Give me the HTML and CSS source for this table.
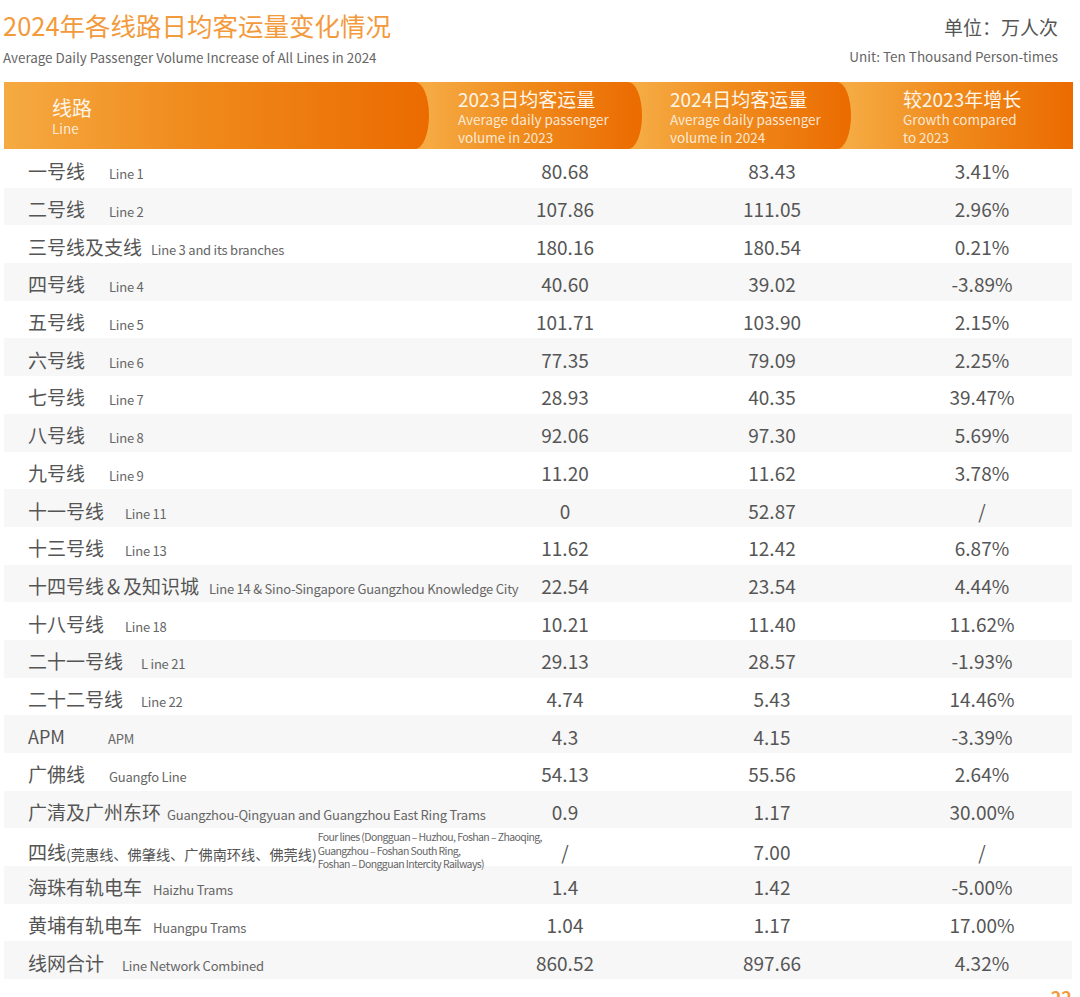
FILE: index.html
```html
<!DOCTYPE html>
<html lang="zh-CN">
<head>
<meta charset="utf-8">
<title>2024年各线路日均客运量变化情况</title>
<link rel="stylesheet" href="styles.css">
</head>
<body>
<div class="page">
  <header class="top">
    <div class="heading">
      <h1 class="title">2024年各线路日均客运量变化情况</h1>
      <p class="subtitle">Average Daily Passenger Volume Increase of All Lines in 2024</p>
    </div>
    <div class="unit">
      <p class="unit-cn">单位：万人次</p>
      <p class="unit-en">Unit: Ten Thousand Person-times</p>
    </div>
  </header>

  <div class="thead">
    <div class="hcell h1 arc">
      <div class="h-cn big">线路</div>
      <div class="h-en">Line</div>
    </div>
    <div class="hcell h2 arc">
      <div class="h-cn">2023日均客运量</div>
      <div class="h-en">Average daily passenger<br>volume in 2023</div>
    </div>
    <div class="hcell h3 arc">
      <div class="h-cn">2024日均客运量</div>
      <div class="h-en">Average daily passenger<br>volume in 2024</div>
    </div>
    <div class="hcell h4">
      <div class="h-cn">较2023年增长</div>
      <div class="h-en">Growth compared<br>to 2023</div>
    </div>
  </div>

  <div class="tbody">
    <div class="row"><div class="name"><span class="cn">一号线</span><span class="en">Line 1</span></div><div class="num">80.68</div><div class="num">83.43</div><div class="num pct">3.41%</div></div>
    <div class="row"><div class="name"><span class="cn">二号线</span><span class="en">Line 2</span></div><div class="num">107.86</div><div class="num">111.05</div><div class="num pct">2.96%</div></div>
    <div class="row"><div class="name"><span class="cn">三号线及支线</span><span class="en g9">Line 3 and its branches</span></div><div class="num">180.16</div><div class="num">180.54</div><div class="num pct">0.21%</div></div>
    <div class="row"><div class="name"><span class="cn">四号线</span><span class="en">Line 4</span></div><div class="num">40.60</div><div class="num">39.02</div><div class="num pct">-3.89%</div></div>
    <div class="row"><div class="name"><span class="cn">五号线</span><span class="en">Line 5</span></div><div class="num">101.71</div><div class="num">103.90</div><div class="num pct">2.15%</div></div>
    <div class="row"><div class="name"><span class="cn">六号线</span><span class="en">Line 6</span></div><div class="num">77.35</div><div class="num">79.09</div><div class="num pct">2.25%</div></div>
    <div class="row"><div class="name"><span class="cn">七号线</span><span class="en">Line 7</span></div><div class="num">28.93</div><div class="num">40.35</div><div class="num pct">39.47%</div></div>
    <div class="row"><div class="name"><span class="cn">八号线</span><span class="en">Line 8</span></div><div class="num">92.06</div><div class="num">97.30</div><div class="num pct">5.69%</div></div>
    <div class="row"><div class="name"><span class="cn">九号线</span><span class="en">Line 9</span></div><div class="num">11.20</div><div class="num">11.62</div><div class="num pct">3.78%</div></div>
    <div class="row"><div class="name"><span class="cn">十一号线</span><span class="en g21">Line 11</span></div><div class="num">0</div><div class="num">52.87</div><div class="num pct">/</div></div>
    <div class="row"><div class="name"><span class="cn">十三号线</span><span class="en g21">Line 13</span></div><div class="num">11.62</div><div class="num">12.42</div><div class="num pct">6.87%</div></div>
    <div class="row"><div class="name"><span class="cn">十四号线＆及知识城</span><span class="en g10">Line 14 &amp; Sino-Singapore Guangzhou Knowledge City</span></div><div class="num">22.54</div><div class="num">23.54</div><div class="num pct">4.44%</div></div>
    <div class="row"><div class="name"><span class="cn">十八号线</span><span class="en g21">Line 18</span></div><div class="num">10.21</div><div class="num">11.40</div><div class="num pct">11.62%</div></div>
    <div class="row"><div class="name"><span class="cn">二十一号线</span><span class="en g18">L ine 21</span></div><div class="num">29.13</div><div class="num">28.57</div><div class="num pct">-1.93%</div></div>
    <div class="row"><div class="name"><span class="cn">二十二号线</span><span class="en g18">Line 22</span></div><div class="num">4.74</div><div class="num">5.43</div><div class="num pct">14.46%</div></div>
    <div class="row"><div class="name"><span class="cn apm">APM</span><span class="en">APM</span></div><div class="num">4.3</div><div class="num">4.15</div><div class="num pct">-3.39%</div></div>
    <div class="row"><div class="name"><span class="cn">广佛线</span><span class="en">Guangfo Line</span></div><div class="num">54.13</div><div class="num">55.56</div><div class="num pct">2.64%</div></div>
    <div class="row"><div class="name"><span class="cn">广清及广州东环</span><span class="en g6">Guangzhou-Qingyuan and Guangzhou East Ring Trams</span></div><div class="num">0.9</div><div class="num">1.17</div><div class="num pct">30.00%</div></div>
    <div class="row"><div class="name four"><span class="cn">四线<small class="cn-sub">(莞惠线、佛肇线、广佛南环线、佛莞线)</small></span><span class="en-multi">Four lines (Dongguan – Huzhou, Foshan – Zhaoqing,<br>Guangzhou – Foshan South Ring,<br>Foshan – Dongguan Intercity Railways)</span></div><div class="num">/</div><div class="num">7.00</div><div class="num pct">/</div></div>
    <div class="row"><div class="name"><span class="cn">海珠有轨电车</span><span class="en g11">Haizhu Trams</span></div><div class="num">1.4</div><div class="num">1.42</div><div class="num pct">-5.00%</div></div>
    <div class="row"><div class="name"><span class="cn">黄埔有轨电车</span><span class="en g11">Huangpu Trams</span></div><div class="num">1.04</div><div class="num">1.17</div><div class="num pct">17.00%</div></div>
    <div class="row"><div class="name"><span class="cn">线网合计</span><span class="en g18">Line Network Combined</span></div><div class="num">860.52</div><div class="num">897.66</div><div class="num pct">4.32%</div></div>
  </div>

  <div class="pageno">22</div>
</div>
</body>
</html>
```

FILE: styles.css
```css
* { box-sizing: border-box; }
html, body { margin: 0; padding: 0; background: #ffffff; }
body {
  font-family: "Noto Sans CJK SC", "Noto Sans", sans-serif;
  color: #555555;
}
.page {
  width: 1080px;
  height: 997px;
  overflow: hidden;
}

/* top heading */
.top {
  display: flex;
  justify-content: space-between;
  height: 82px;
  padding: 8px 22px 0 3px;
}
.title {
  margin: 0;
  font-size: 25.5px;
  line-height: 34px;
  font-weight: 400;
  color: #f39a3c;
}
.subtitle {
  margin: 6px 0 0;
  font-size: 13.4px;
  line-height: 18px;
  color: #666666;
}
.unit { text-align: right; }
.unit-cn {
  margin: 5px 0 0;
  font-size: 19px;
  line-height: 28px;
  color: #555555;
}
.unit-en {
  margin: 6px 0 0;
  font-size: 13.5px;
  line-height: 18px;
  color: #666666;
}

/* table head */
.thead {
  display: flex;
  margin-left: 4px;
  width: 1069px;
  height: 67px;
  background: #f5aa42;
}
.hcell {
  height: 67px;
  color: #fff6ea;
  background: linear-gradient(90deg, #f5aa42 0%, #f08a1c 45%, #eb6b00 100%);
  padding-top: 6px;
}
.hcell.arc {
  border-top-right-radius: 14px 50%;
  border-bottom-right-radius: 14px 50%;
}
.h1 { width: 425px; padding-left: 48px; padding-top: 15px; }
.h2 { width: 213px; padding-left: 29px; }
.h3 { width: 209px; padding-left: 28px; }
.h4 { width: 222px; padding-left: 52px; }
.h-cn {
  font-size: 19px;
  line-height: 22px;
}
.h-cn.big { font-size: 20px; }
.h-en {
  font-size: 13.5px;
  line-height: 18px;
  color: rgba(255, 244, 230, 0.9);
}

/* body rows */
.tbody {
  margin-top: 1px;
  margin-left: 4px;
  width: 1068px;
}
.row {
  display: grid;
  grid-template-columns: 458px 206px 208px 196px;
  height: 37.7px;
  align-items: center;
  padding-top: 4px;
}
.row:nth-child(even) { background: #f7f7f7; }
.name {
  padding-left: 24px;
  white-space: nowrap;
}
.cn {
  font-size: 19px;
  color: #555555;
}
.cn.apm { font-size: 18px; }
.en {
  font-size: 13px;
  color: #666666;
  letter-spacing: -0.22px;
  margin-left: 24px;
}
.en.g21 { margin-left: 21px; }
.en.g18 { margin-left: 18px; }
.en.g11 { margin-left: 11px; }
.en.g10 { margin-left: 10px; }
.en.g9 { margin-left: 9px; }
.en.g6 { margin-left: 6px; }
.apm + .en { margin-left: 43px; }

.name.four {
  display: flex;
  align-items: center;
  margin-top: 0;
}
.cn-sub { font-size: 14.2px; }
.en-multi {
  font-size: 10.5px;
  line-height: 13.5px;
  letter-spacing: -0.6px;
  color: #666666;
  margin-left: 1px;
  margin-top: -2px;
}

.num {
  text-align: center;
  font-size: 19px;
  color: #555555;
}
.num.pct { padding-left: 16px; }

.pageno {
  margin-top: 9px;
  text-align: right;
  padding-right: 8px;
  font-size: 18px;
  line-height: 18px;
  font-weight: 700;
  color: #f39a3c;
}
```
